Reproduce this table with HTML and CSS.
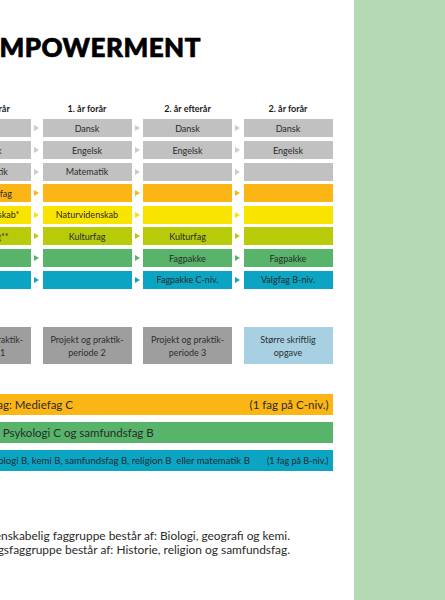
FILE: index.html
```html
<!DOCTYPE html>
<html lang="da">
<head>
    <meta charset="UTF-8">
    <meta name="viewport" content="width=device-width, initial-scale=1.0">
    <title>Empowerment - studieplan</title>
    <link rel="stylesheet" href="styles.css">
</head>
<body>
<div class="sheet">
    <div class="main">
        <div class="doc">
            <h1 class="title">EMPOWERMENT</h1>

            <!-- Skema over fag pr. semester -->
            <div class="plan">
                <div class="row head">
                    <div class="cell">1. år efterår</div><i></i>
                    <div class="cell">1. år forår</div><i></i>
                    <div class="cell">2. år efterår</div><i></i>
                    <div class="cell">2. år forår</div>
                </div>
                <div class="row gray">
                    <div class="cell">Dansk</div><i class="arrow"></i>
                    <div class="cell">Dansk</div><i class="arrow"></i>
                    <div class="cell">Dansk</div><i class="arrow"></i>
                    <div class="cell">Dansk</div>
                </div>
                <div class="row gray">
                    <div class="cell">Engelsk</div><i class="arrow"></i>
                    <div class="cell">Engelsk</div><i class="arrow"></i>
                    <div class="cell">Engelsk</div><i class="arrow"></i>
                    <div class="cell">Engelsk</div>
                </div>
                <div class="row gray">
                    <div class="cell">Matematik</div><i class="arrow"></i>
                    <div class="cell">Matematik</div><i class="arrow"></i>
                    <div class="cell"></div><i class="arrow"></i>
                    <div class="cell"></div>
                </div>
                <div class="row orange">
                    <div class="cell">Samfundsfag</div><i class="arrow"></i>
                    <div class="cell"></div><i class="arrow"></i>
                    <div class="cell"></div><i class="arrow"></i>
                    <div class="cell"></div>
                </div>
                <div class="row yellow">
                    <div class="cell">Naturvidenskab*</div><i class="arrow"></i>
                    <div class="cell">Naturvidenskab</div><i class="arrow"></i>
                    <div class="cell"></div><i class="arrow"></i>
                    <div class="cell"></div>
                </div>
                <div class="row lime">
                    <div class="cell">Kulturfag**</div><i class="arrow"></i>
                    <div class="cell">Kulturfag</div><i class="arrow"></i>
                    <div class="cell">Kulturfag</div><i class="arrow"></i>
                    <div class="cell"></div>
                </div>
                <div class="row green">
                    <div class="cell"></div><i class="arrow"></i>
                    <div class="cell"></div><i class="arrow"></i>
                    <div class="cell">Fagpakke</div><i class="arrow"></i>
                    <div class="cell">Fagpakke</div>
                </div>
                <div class="row teal">
                    <div class="cell"></div><i class="arrow"></i>
                    <div class="cell"></div><i class="arrow"></i>
                    <div class="cell">Fagpakke C-niv.</div><i class="arrow"></i>
                    <div class="cell">Valgfag B-niv.</div>
                </div>
            </div>

            <!-- Projekter -->
            <div class="projects">
                <div class="project">Projekt og praktik-<br>periode 1</div>
                <div class="project">Projekt og praktik-<br>periode 2</div>
                <div class="project">Projekt og praktik-<br>periode 3</div>
                <div class="project task">Større skriftlig<br>opgave</div>
            </div>

            <!-- Valgmuligheder -->
            <div class="bars">
                <div class="bar orange">
                    <span>Valgfag: Mediefag C</span>
                    <span>(1 fag på C-niv.)</span>
                </div>
                <div class="bar green">
                    <span>Fagpakke: Psykologi C og samfundsfag B</span>
                </div>
                <div class="bar teal">
                    <span>Valgfag: Biologi B, kemi B, samfundsfag B, religion B &nbsp;eller matematik B</span>
                    <span class="small">(1 fag på B-niv.)</span>
                </div>
            </div>

            <div class="notes">
                <p>*Den naturvidenskabelig faggruppe består af: Biologi, geografi og kemi.</p>
                <p>**Kulturformidlingsfaggruppe består af: Historie, religion og samfundsfag.</p>
            </div>
        </div>
    </div>
    <div class="side"></div>
</div>
</body>
</html>
```

FILE: styles.css
```css
body {
    margin: 0;
    font-family: Lato, "Liberation Sans", sans-serif;
    color: #2a2a2a;
    background: #fff;
}
.sheet {
    display: flex;
    height: 600px;
    overflow: hidden;
}
.main {
    flex: 0 0 354px;
    overflow: hidden;
}
/* the page is cropped on the left */
.doc {
    margin-left: -58px;
    width: 390.5px;
    padding-top: 32px;
}
.side {
    flex: 1;
    background: #b5d9b3;
}
.title {
    margin: 0 0 0 42px;
    font-size: 26px;
    line-height: 30px;
    font-weight: 900;
    letter-spacing: 0.5px;
    -webkit-text-stroke: 0.7px #000;
    color: #000;
}

.plan {
    margin-top: 39.5px;
    display: flex;
    flex-direction: column;
    gap: 3.6px;
}
.row {
    display: grid;
    grid-template-columns: 89px 11.5px 89px 11.5px 89px 11.5px 89px;
    height: 18px;
}
.row.head {
    height: 14.4px;
}
.cell {
    display: flex;
    align-items: center;
    justify-content: center;
    font-size: 9px;
    white-space: nowrap;
    background: var(--c);
}
.head .cell {
    font-weight: 700;
    color: #1a1a1a;
    background: none;
}
.arrow {
    display: flex;
    align-items: center;
    justify-content: center;
    color: var(--a, var(--c));
}
.arrow::before {
    content: "";
    border-left: 5px solid currentColor;
    border-top: 3.5px solid transparent;
    border-bottom: 3.5px solid transparent;
}
.gray { --c: #c1c1c1; --a: #cbcbcb; }
.orange { --c: #fbb616; }
.yellow { --c: #f9e400; }
.lime { --c: #b7cb0b; }
.green { --c: #58b46b; }
.teal { --c: #0ba4c3; }

.projects {
    margin-top: 38.8px;
    display: grid;
    grid-template-columns: repeat(4, 89px);
    column-gap: 11.5px;
}
.project {
    height: 37px;
    background: #9e9e9e;
    display: flex;
    align-items: center;
    justify-content: center;
    text-align: center;
    font-size: 9px;
    line-height: 13px;
    color: #2e2e2e;
    white-space: nowrap;
}
.project.task {
    background: #a7d1e3;
}

.bars {
    margin-top: 30px;
    display: flex;
    flex-direction: column;
    gap: 7px;
}
.bar {
    height: 21px;
    display: flex;
    align-items: center;
    justify-content: space-between;
    font-size: 11.5px;
    white-space: nowrap;
    padding: 0 4px 0 0;
    background: var(--c);
    color: #2a2a2a;
}
.bar.orange { padding-left: 30px; }
.bar.green { padding-left: 8px; }
.bar.teal {
    padding-left: 12px;
    font-size: 9.6px;
    color: #1d2d33;
}
.bar .small {
    font-size: 9px;
}

.notes {
    margin-top: 58px;
    padding-right: 42.5px;
    font-size: 11.9px;
    line-height: 14px;
}
.notes p {
    margin: 0;
    display: flex;
    justify-content: flex-end;
    white-space: nowrap;
}
```
